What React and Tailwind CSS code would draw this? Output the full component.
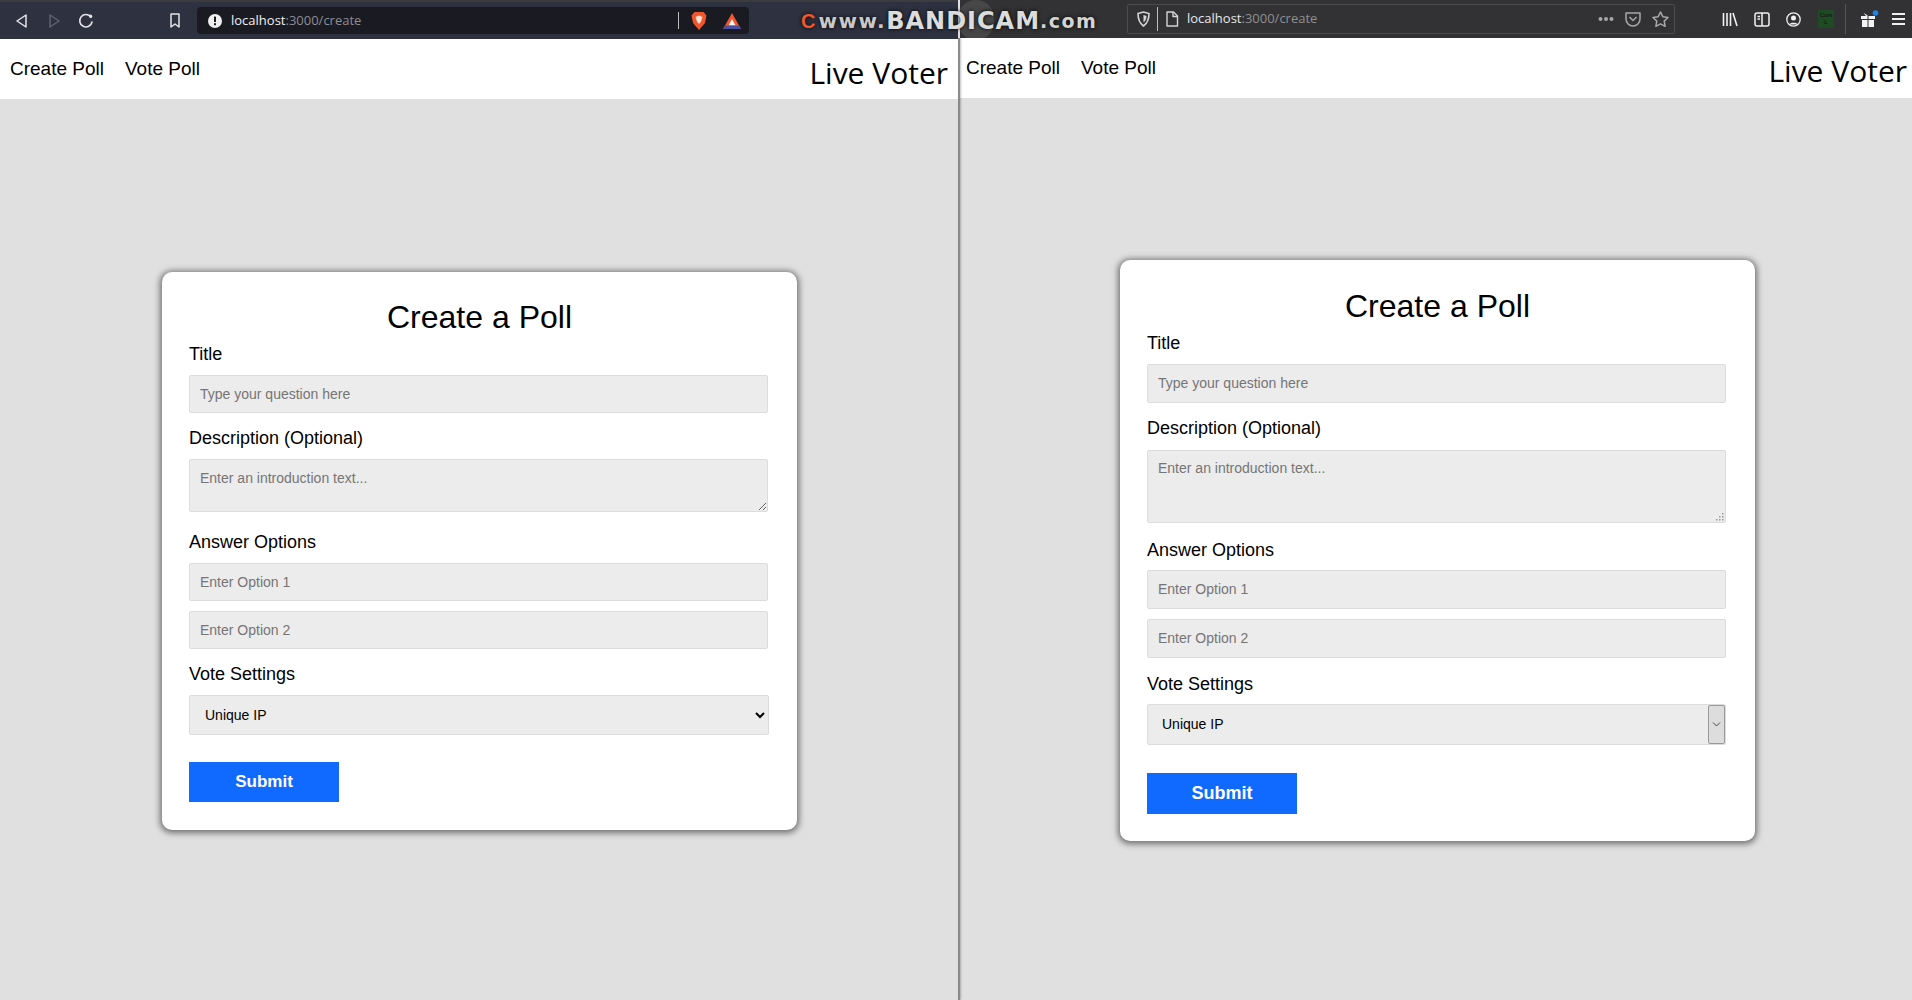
import React from "react";

// Per-browser spacing, the two windows render the same form slightly differently
const leftForm = {
  card: "mt-[3px] pt-[27px] pb-[28px] ml-[1px]",
  heading: "mb-[8px]",
  titleLabel: "mb-[10px]",
  input: "h-[38px]",
  descLabel: "mt-[15px] mb-[10px]",
  textarea: "h-[53px] py-[8px]",
  answerLabel: "mt-[20px] mb-[10px]",
  voteLabel: "mt-[15px] mb-[10px]",
  select: "h-[40px] w-[580px]",
  submit: "mt-[27px] h-[40px] text-[17px]",
};

const rightForm = {
  card: "mt-[2px] pt-[28px] pb-[27px] ml-[3px]",
  heading: "mb-[8px]",
  titleLabel: "mb-[10px]",
  input: "h-[39px]",
  descLabel: "mt-[15px] mb-[11px]",
  textarea: "h-[73px] py-[7px]",
  answerLabel: "mt-[17px] mb-[9px]",
  voteLabel: "mt-[16px] mb-[9px]",
  select: "h-[41px] w-[579px]",
  submit: "mt-[28px] h-[41px] text-[18px]",
};

const fieldClass =
  "block w-[579px] border border-[#dcdcdc] rounded-[2px] bg-[#ececec] px-[10px] text-[14px] text-black placeholder:text-[#757575] outline-none";

const PollForm = ({ s, firefox }) => {
  return (
    <div
      className={`w-[635px] rounded-[10px] bg-white px-[27px] shadow-[0_1px_6px_2px_rgba(0,0,0,0.5)] ${s.card}`}
    >
      <h1 className={`text-center text-[32px] leading-[37px] text-black ${s.heading}`}>
        Create a Poll
      </h1>

      <label className={`block text-[18px] leading-[21px] text-black ${s.titleLabel}`}>Title</label>
      <input className={`${fieldClass} ${s.input}`} placeholder="Type your question here" />

      <label className={`block text-[18px] leading-[21px] text-black ${s.descLabel}`}>
        Description (Optional)
      </label>
      {firefox ? (
        <div className="relative w-[579px]">
          <textarea
            className={`${fieldClass} ${s.textarea} resize-none`}
            placeholder="Enter an introduction text..."
          />
          <svg className="absolute right-[2px] bottom-[2px] h-[8px] w-[8px]" viewBox="0 0 8 8" fill="#9a9a9a">
            <rect x="6" y="0" width="1.5" height="1.5" />
            <rect x="3" y="3" width="1.5" height="1.5" />
            <rect x="6" y="3" width="1.5" height="1.5" />
            <rect x="0" y="6" width="1.5" height="1.5" />
            <rect x="3" y="6" width="1.5" height="1.5" />
            <rect x="6" y="6" width="1.5" height="1.5" />
          </svg>
        </div>
      ) : (
        <textarea
          className={`${fieldClass} ${s.textarea}`}
          placeholder="Enter an introduction text..."
        />
      )}

      <label className={`block text-[18px] leading-[21px] text-black ${s.answerLabel}`}>
        Answer Options
      </label>
      <input className={`${fieldClass} ${s.input}`} placeholder="Enter Option 1" />
      <input className={`${fieldClass} ${s.input} mt-[10px]`} placeholder="Enter Option 2" />

      <label className={`block text-[18px] leading-[21px] text-black ${s.voteLabel}`}>
        Vote Settings
      </label>
      {firefox ? (
        <div className={`relative ${s.select}`}>
          <select className="block h-full w-full appearance-none border border-[#dcdcdc] rounded-[2px] bg-[#ececec] pl-[14px] text-[14px] text-black outline-none">
            <option>Unique IP</option>
          </select>
          {/* Firefox dropdown button */}
          <div className="absolute top-[1px] right-[1px] bottom-[1px] flex w-[17px] items-center justify-center rounded-[2px] border border-[#999999] bg-[#dddddd]">
            <svg className="h-[7px] w-[9px]" viewBox="0 0 9 7" fill="none" stroke="#444444" strokeWidth="1">
              <path d="M1 1.5l3.5 3.5L8 1.5" />
            </svg>
          </div>
        </div>
      ) : (
        <select
          className={`block border border-[#dcdcdc] rounded-[2px] bg-[#ececec] pl-[11px] text-[14px] text-black outline-none ${s.select}`}
        >
          <option>Unique IP</option>
        </select>
      )}

      <button className={`block w-[150px] bg-[#116aff] font-bold text-white ${s.submit}`}>Submit</button>
    </div>
  );
};

const NavBar = ({ className, voterClass }) => {
  return (
    <div className={`flex items-center justify-between bg-white ${className}`}>
      <div className="flex gap-[21px] text-[19px] leading-[22px] text-black">
        <a>Create Poll</a>
        <a>Vote Poll</a>
      </div>
      <span className={`font-['Open_Sans',sans-serif] text-[30px] leading-[40px] text-black ${voterClass}`}>
        Live Voter
      </span>
    </div>
  );
};

const BraveToolbar = () => {
  return (
    <div className="flex h-[39px] items-center border-t-[2px] border-[#3b3b40] bg-[#2e3140] pl-[15px]">
      <svg className="h-[16px] w-[13px]" viewBox="0 0 13 16" fill="none" stroke="#e4e4e8" strokeWidth="1.5" strokeLinejoin="round">
        <path d="M11 2v12L2 8z" />
      </svg>
      <svg className="ml-[20px] h-[16px] w-[13px]" viewBox="0 0 13 16" fill="none" stroke="#5f626f" strokeWidth="1.5" strokeLinejoin="round">
        <path d="M2 2v12l9-6z" />
      </svg>
      <svg className="ml-[17px] h-[16px] w-[16px]" viewBox="0 0 16 16" fill="none" stroke="#e4e4e8" strokeWidth="1.6" strokeLinecap="round">
        <path d="M13 4.2A6.2 6.2 0 1 0 14 9" />
        <circle cx="12.6" cy="3.2" r="1.6" fill="#e4e4e8" stroke="none" />
      </svg>
      <svg className="ml-[75px] h-[15px] w-[12px]" viewBox="0 0 12 15" fill="none" stroke="#e4e4e8" strokeWidth="1.5" strokeLinejoin="round">
        <path d="M2 1h8v13l-4-3-4 3z" />
      </svg>
      <div className="ml-[16px] flex h-[27px] w-[552px] items-center rounded-[4px] bg-[#1a1a22] pl-[11px]">
        <svg className="h-[14px] w-[14px]" viewBox="0 0 14 14">
          <circle cx="7" cy="7" r="7" fill="#f0f0f0" />
          <rect x="6" y="2.6" width="2" height="5.4" fill="#1a1a22" />
          <rect x="6" y="9.2" width="2" height="2" fill="#1a1a22" />
        </svg>
        <span className="ml-[9px] font-['Open_Sans',sans-serif] text-[13px] text-[#8d8d93]">
          <span className="text-[#f0f0f0]">localhost</span>:3000/create
        </span>
        <div className="ml-[317px] h-[17px] w-px bg-[#bdbdbd]" />
        <svg className="ml-[12px] h-[20px] w-[16px]" viewBox="0 0 16 20">
          <path d="M3.5 1h9L15.5 4.5 14 12l-6 7-6-7L.5 4.5z" fill="#f0562b" />
          <path d="M4.5 6l3.5-1.5L11.500 6 10 10.500 8 13 6 10.500z" fill="#f7e3d8" />
        </svg>
        <svg className="ml-[16px] h-[16px] w-[18px]" viewBox="0 0 18 16">
          <path d="M9 0l9 16H0z" fill="#f0562b" />
          <path d="M9 6l3.500 6.500h-7z" fill="#f4f4f4" />
          <path d="M2.500 12.500h13L18 16H0z" fill="#4a4fa0" />
        </svg>
      </div>
    </div>
  );
};

const FirefoxToolbar = () => {
  return (
    <div className="flex h-[38px] items-center bg-[#323234] pl-[167px] text-[#e8e8e8]">
      <div className="flex h-[30px] w-[548px] items-center rounded-[2px] border border-[#4c4c4e] pl-[9px]">
        <svg className="h-[16px] w-[13px]" viewBox="0 0 13 16" fill="none" stroke="#d4d4d4" strokeWidth="1.6">
          <path d="M1 2.500L6.500 1 12 2.500C12 9 10 12.500 6.500 15 3 12.500 1 9 1 2.500z" />
          <path d="M6.500 4L9.500 5C9.500 8 8.500 10 6.500 11.500z" fill="#d4d4d4" stroke="none" />
        </svg>
        <div className="ml-[7px] h-[24px] w-px bg-[#bdbdbd]" />
        <svg className="ml-[7px] h-[16px] w-[14px]" viewBox="0 0 14 16" fill="none" stroke="#d4d4d4" strokeWidth="1.4" strokeLinejoin="round">
          <path d="M2 1h6.500L12.500 5v10H2z" />
          <path d="M8 1v4.500h4.500" />
        </svg>
        <span className="ml-[8px] font-['Open_Sans',sans-serif] text-[13px] text-[#8f8f91]">
          <span className="text-[#e8e8e8]">localhost</span>:3000/create
        </span>
        <svg className="ml-[281px] h-[6px] w-[16px]" viewBox="0 0 16 6" fill="#a8a8a8">
          <circle cx="2.500" cy="3" r="2" />
          <circle cx="8" cy="3" r="2" />
          <circle cx="13.500" cy="3" r="2" />
        </svg>
        <svg className="ml-[11px] h-[16px] w-[16px]" viewBox="0 0 16 16" fill="none" stroke="#a8a8a8" strokeWidth="1.5" strokeLinejoin="round">
          <path d="M1 2h14v6a7 7 0 0 1-14 0z" />
          <path d="M4.500 6L8 9.500 11.500 6" />
        </svg>
        <svg className="ml-[11px] h-[16px] w-[17px]" viewBox="0 0 17 16" fill="none" stroke="#a8a8a8" strokeWidth="1.5" strokeLinejoin="round">
          <path d="M8.500 1l2.300 4.700 5.200.8-3.800 3.600.9 5.200-4.600-2.400-4.600 2.400.9-5.200L1 6.500l5.200-.8z" />
        </svg>
      </div>
      <svg className="ml-[47px] h-[15px] w-[16px]" viewBox="0 0 16 15" fill="none" stroke="#f0f0f0" strokeWidth="1.6">
        <path d="M1.500 1v13M5 1v13M8.500 1v13M11 1l4 13" />
      </svg>
      <svg className="ml-[16px] h-[15px] w-[16px]" viewBox="0 0 16 15" fill="none" stroke="#f0f0f0" strokeWidth="1.5">
        <rect x="1" y="1" width="14" height="13" rx="2" />
        <path d="M8 1v13M3.500 4.500h2.500M3.500 7h2.500" />
      </svg>
      <svg className="ml-[16px] h-[15px] w-[15px]" viewBox="0 0 15 15" fill="none" stroke="#f0f0f0" strokeWidth="1.3">
        <circle cx="7.500" cy="7.500" r="6.700" />
        <circle cx="7.500" cy="6" r="2.500" fill="#f0f0f0" stroke="none" />
        <path d="M3 12.500c1-2.500 8-2.500 9 0" fill="#f0f0f0" stroke="none" />
      </svg>
      <div className="ml-[17px] flex h-[18px] w-[16px] flex-col items-center justify-center bg-[#1f4a24] text-[6px] leading-[7px] text-[#0d0d0d]">
        <span>Cors</span>
        <span>L</span>
      </div>
      <div className="ml-[11px] h-[30px] w-px bg-[#555557]" />
      <svg className="ml-[14px] h-[18px] w-[19px]" viewBox="0 0 19 18" fill="#f4f4f4">
        <rect x="1" y="6" width="6.500" height="3" />
        <rect x="8.500" y="6" width="6.500" height="3" />
        <rect x="2" y="10" width="5.500" height="7" />
        <rect x="8.500" y="10" width="5.500" height="7" />
        <path d="M3.500 3l4.500 2.500L6 6z" />
        <circle cx="15.500" cy="3" r="2.800" fill="#1c86e8" />
      </svg>
      <svg className="ml-[13px] h-[14px] w-[13px]" viewBox="0 0 13 14" fill="#f0f0f0">
        <rect y="1" width="13" height="2" />
        <rect y="6" width="13" height="2" />
        <rect y="11" width="13" height="2" />
      </svg>
    </div>
  );
};

const App = () => {
  return (
    <div className="relative flex h-screen w-full overflow-hidden bg-[#e0e0e0] font-['Liberation_Sans',Arial,sans-serif]">
      {/* Chromium-based window */}
      <div className="flex w-[958px] flex-col">
        <BraveToolbar />
        <NavBar className="h-[60px] pl-[10px] pr-[10px]" voterClass="mt-[8px]" />
        <div className="flex flex-1 items-center justify-center">
          <PollForm s={leftForm} />
        </div>
      </div>

      <div className="z-10 mt-[38px] w-[2px] bg-[#8a8a8a] shadow-[1px_0_2px_rgba(0,0,0,0.25)]" />

      {/* Firefox window */}
      <div className="flex flex-1 flex-col">
        <FirefoxToolbar />
        <NavBar className="h-[60px] pl-[6px] pr-[5px]" voterClass="mt-[6px]" />
        <div className="flex flex-1 items-center justify-center">
          <PollForm s={rightForm} firefox />
        </div>
      </div>

      {/* Recorder watermark */}
      <div className="absolute top-[8px] left-[801px] z-20 flex h-[26px] w-[300px] items-center whitespace-nowrap font-['DejaVu_Sans',sans-serif] font-bold text-[#dcdcdc] [text-shadow:0_0_4px_#000]">
        <span className="mr-[3px] font-['Liberation_Sans',sans-serif] text-[20px] text-[#f0562b]">C</span>
        <span className="text-[20px] tracking-[1.5px] text-[#c9c9c9]">www.</span>
        <span className="text-[24px] tracking-[1px]">BANDICAM</span>
        <span className="text-[19px] tracking-[1.5px] text-[#d4d4d4]">.com</span>
      </div>
      <div className="absolute top-[0px] left-[958px] h-[40px] w-[36px] rounded-full bg-white/10" />
    </div>
  );
};

export default App;
